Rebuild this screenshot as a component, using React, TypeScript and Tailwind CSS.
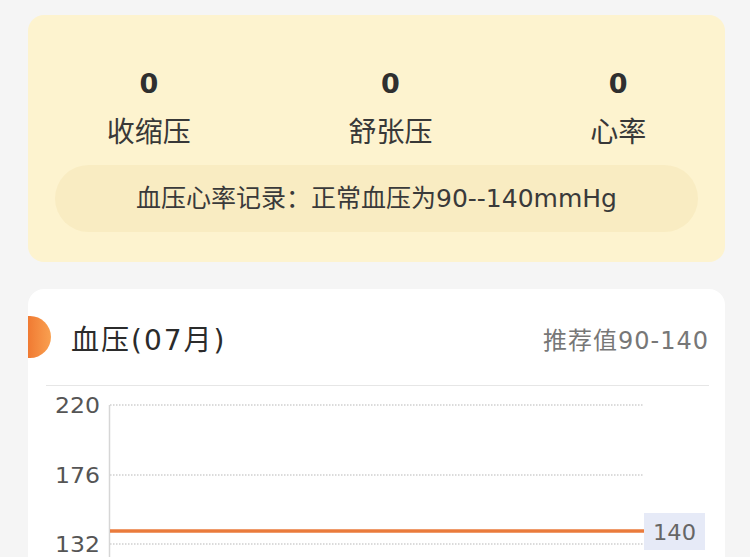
import React from "react";

const font = { fontFamily: '"DejaVu Sans", "Noto Sans CJK SC", sans-serif' };

const stats = [
  { value: 0, label: "收缩压" },
  { value: 0, label: "舒张压" },
  { value: 0, label: "心率" },
];

const ticks = [
  { label: "220", y: 19 },
  { label: "176", y: 89 },
  { label: "132", y: 158 },
];

function Chart() {
  return (
    <svg width="663" height="240" className="block" style={font}>
      {ticks.map((t) => (
        <g key={t.label}>
          <text x="9" y={t.y + 8} textLength="45" lengthAdjust="spacingAndGlyphs" fontSize="22" fill="#555">
            {t.label}
          </text>
          <line x1="64" y1={t.y} x2="597" y2={t.y} stroke="#cfcfcf" strokeWidth="1.5" strokeDasharray="1.5 1.5" />
        </g>
      ))}
      <line x1="63.5" y1="19" x2="63.5" y2="240" stroke="#d6d6d6" strokeWidth="1.5" />
      <line x1="64" y1="145" x2="598" y2="145" stroke="#ea7b3c" strokeWidth="3.5" />
      <rect x="598" y="127" width="61" height="37" fill="#e6eaf7" />
      <text x="607" y="154" textLength="43" lengthAdjust="spacingAndGlyphs" fontSize="22" fill="#666">
        140
      </text>
    </svg>
  );
}

export default function App() {
  return (
    <main className="min-h-screen bg-[#f5f5f5] pt-[15px] pl-[28px] pr-[25px]" style={font}>
      {/* Summary */}
      <div className="rounded-[16px] bg-[#fdf3cf] pt-[51px] pb-[30px] px-[27px]">
        <div className="flex justify-around -mx-[27px]">
          {stats.map((s) => (
            <div key={s.label} className="flex flex-col items-center">
              <div className="text-[27px] leading-[36px] font-bold text-[#2f2f2f]">{s.value}</div>
              <div className="mt-[13px] text-[28px] leading-[36px] text-[#383838]">{s.label}</div>
            </div>
          ))}
        </div>
        <div className="mt-[14px] h-[67px] rounded-full bg-[#f9ecc2] flex items-center justify-center text-[25px] text-[#3a3a3a]">
          血压心率记录：正常血压为90--140mmHg
        </div>
      </div>

      {/* Chart card */}
      <div className="mt-[27px] rounded-t-[16px] bg-white pt-[27px] pl-[18px] pr-[16px] overflow-hidden">
        <div className="flex items-start -ml-[18px]">
          <div className="w-[23px] h-[42px] rounded-r-full bg-gradient-to-r from-[#f07a32] to-[#f9a050]" />
          <div className="ml-[20px] pt-[4px] text-[28px] leading-[42px] tracking-[2px] text-[#2b2b2b]">血压(07月)</div>
          <div className="ml-auto pt-[4px] text-[24px] leading-[42px] tracking-[1px] text-[#777]">推荐值90-140</div>
        </div>
        <div className="mt-[23px] h-px bg-[#e6e6e6]" />
        <Chart />
      </div>
    </main>
  );
}
